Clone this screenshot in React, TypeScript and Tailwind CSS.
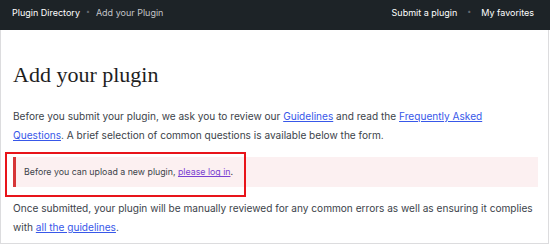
import React from "react";

const App = () => {
  return (
    <div className="w-[550px] h-[245px] bg-white overflow-hidden relative" style={{ fontFamily: "Inter, 'Liberation Sans', sans-serif" }}>
      <header className="h-[30px] bg-[#1d2327] flex items-center justify-between pl-3 pr-4 text-[9px] pb-[5px]">
        <nav className="flex items-center gap-[6px]">
          <a href="#" className="text-white">Plugin Directory</a>
          <span className="text-[#646970] text-[7px]">•</span>
          <span className="text-[#c3c4c7]">Add your Plugin</span>
        </nav>
        <nav className="flex items-center gap-[10px]">
          <a href="#" className="text-white">Submit a plugin</a>
          <span className="text-[#646970] text-[7px]">•</span>
          <a href="#" className="text-white">My favorites</a>
        </nav>
      </header>
      <main className="h-[214px] border-x border-b border-[#dcdcde] mr-[1px] pl-3 pr-[10px] text-[#3c434a]">
        <h1 className="pt-[30px] text-[22px] leading-[30px] text-[#1e1e1e]" style={{ fontFamily: "'Liberation Serif', serif" }}>
          Add your plugin
        </h1>
        <p className="mt-[17px] max-w-[490px] text-[10.1px] leading-[19px]">
          Before you submit your plugin, we ask you to review our{" "}
          <a href="#" className="text-[#3858e9] underline">Guidelines</a> and read the{" "}
          <a href="#" className="text-[#3858e9] underline">Frequently Asked Questions</a>. A brief selection of common questions is available below the form.
        </p>
        <div className="mt-[12px] bg-[#fcf0f1] border-l-[3px] border-[#d63638] h-[30px] flex items-center pl-[8px] text-[8.8px]">
          <span>
            Before you can upload a new plugin,{" "}
            <a href="#" className="text-[#7b3fd1] underline">please log in</a>.
          </span>
        </div>
        <p className="mt-[12px] text-[10.1px] leading-[19px]">
          Once submitted, your plugin will be manually reviewed for any common errors as well as ensuring it complies with{" "}
          <a href="#" className="text-[#3858e9] underline">all the guidelines</a>.
        </p>
      </main>
      <div className="absolute left-[5px] top-[152px] w-[241px] h-[45px] border-[2.5px] border-[#e8141a]" />
    </div>
  );
};

export default App;
